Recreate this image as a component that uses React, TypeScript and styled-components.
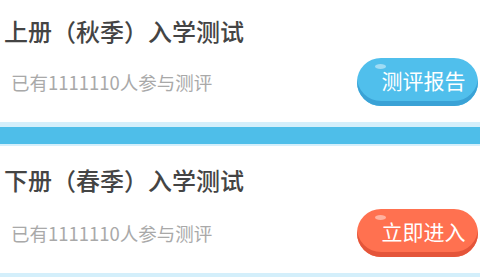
import React from "react";
import styled, { createGlobalStyle } from "styled-components";

const Global = createGlobalStyle`
  html, body { margin: 0; padding: 0; background: #ffffff; }
  body { font-family: "Noto Sans CJK SC", "Noto Sans", sans-serif; }
  * { box-sizing: border-box; }
`;

const Page = styled.div`
  width: 480px;
  height: 277px;
  overflow: hidden;
  background: #ffffff;
  display: flex;
  flex-direction: column;
`;

const Card = styled.section<{ $top: number; $bottom: number; $gap: number }>`
  display: flex;
  flex-direction: column;
  gap: ${(p) => p.$gap}px;
  padding: ${(p) => p.$top}px 0 ${(p) => p.$bottom}px 4px;
  background: #ffffff;
`;

const Title = styled.h2`
  margin: 0;
  font-size: 24px;
  line-height: 24px;
  font-weight: 500;
  color: #444444;
  white-space: nowrap;
`;

const Row = styled.div`
  display: flex;
  align-items: center;
  justify-content: space-between;
`;

const Count = styled.span`
  margin-left: 7px;
  font-size: 18.5px;
  line-height: 24px;
  color: #a9a9a9;
  white-space: nowrap;
`;

const Button = styled.button<{ $tone: "blue" | "orange" }>`
  position: relative;
  width: 121px;
  height: 48px;
  margin-right: 2px;
  border: none;
  border-radius: 24px;
  padding: 0 0 5px 12px;
  display: flex;
  align-items: center;
  justify-content: center;
  font-family: "Noto Sans CJK SC", "Noto Sans", sans-serif;
  font-size: 21px;
  font-weight: 400;
  color: #ffffff;
  background: ${(p) => (p.$tone === "blue" ? "#50bfec" : "#ff7150")};
  box-shadow: inset 0 -5px 0 ${(p) => (p.$tone === "blue" ? "#3aa2d6" : "#e4553a")};
  &::before {
    content: "";
    position: absolute;
    left: 18px;
    top: 6px;
    width: 11px;
    height: 5px;
    border-radius: 50%;
    background: rgba(255, 255, 255, 0.45);
  }
`;

const Divider = styled.div`
  height: 24px;
  background: #4ebee9;
  border-top: 5px solid #d4effb;
  border-bottom: 2px solid #d4effb;
`;

const BottomBand = styled.div`
  flex: 1;
  background: #d4effb;
`;

const items = [
  { title: "上册（秋季）入学测试", count: "已有1111110人参与测评", action: "测评报告", tone: "blue" as const },
  { title: "下册（春季）入学测试", count: "已有1111110人参与测评", action: "立即进入", tone: "orange" as const },
];

export default function App() {
  return (
    <>
      <Global />
      <Page>
        <Card $top={19} $bottom={16} $gap={15}>
          <Title>{items[0].title}</Title>
          <Row>
            <Count>{items[0].count}</Count>
            <Button $tone={items[0].tone}>{items[0].action}</Button>
          </Row>
        </Card>
        <Divider />
        <Card $top={22} $bottom={16} $gap={17}>
          <Title>{items[1].title}</Title>
          <Row>
            <Count>{items[1].count}</Count>
            <Button $tone={items[1].tone}>{items[1].action}</Button>
          </Row>
        </Card>
        <BottomBand />
      </Page>
    </>
  );
}
